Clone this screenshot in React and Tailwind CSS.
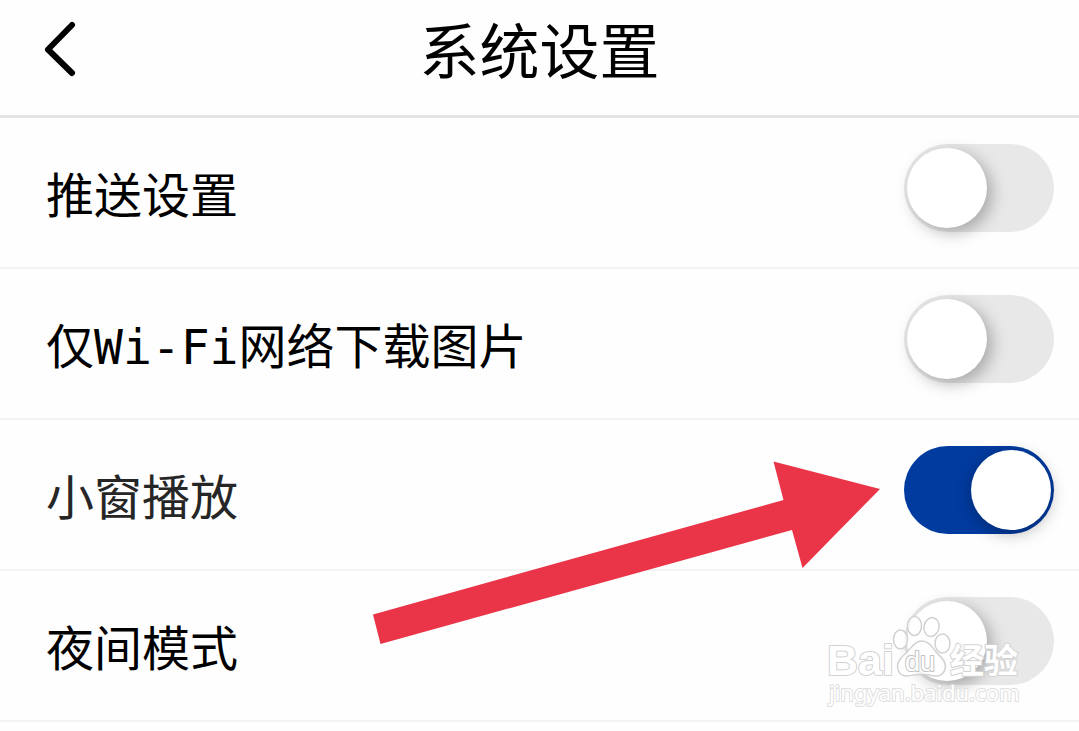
const rows = [
  { id: "push", label: "推送设置", on: false, tone: "text-black" },
  { id: "wifi", label: "仅Wi-Fi网络下载图片", on: false, tone: "text-black" },
  { id: "pip", label: "小窗播放", on: true, tone: "text-[#262626]" },
  { id: "night", label: "夜间模式", on: false, tone: "text-black" },
];

function SettingRow({ id, label, on, tone }) {
  return (
    <li className="flex h-[151px] items-start justify-between border-b-2 border-[#f3f3f3] pr-[25px] pl-[46px] pt-[26px]">
      <label htmlFor={id} className={`pt-4 text-5xl leading-[72px] ${tone}`}>
        {label}
      </label>
      <input
        id={id}
        type="checkbox"
        role="switch"
        defaultChecked={on}
        className="flex h-[88px] w-[150px] shrink-0 cursor-pointer appearance-none items-center justify-start rounded-full bg-[#e8e8e8] px-[3px] before:size-20 before:rounded-full before:bg-white before:shadow-[5px_5px_16px_rgba(0,0,0,0.28)] before:content-[''] checked:justify-end checked:bg-[#003b9f] checked:before:shadow-[0_4px_16px_rgba(0,0,0,0.28)]"
      />
    </li>
  );
}

function Arrow() {
  return (
    <svg
      aria-hidden="true"
      className="pointer-events-none absolute top-[461px] left-[372px] h-[184px] w-[510px]"
      viewBox="372 461 510 184"
    >
      <path d="M373 614.500 L783.500 500 L773.500 461.500 L880 489 L802.500 568 L792 530 L380.500 644 Z" fill="#ea3548" />
    </svg>
  );
}

function Watermark() {
  return (
    <svg
      className="pointer-events-none absolute top-[608px] left-[820px] h-[104px] w-[210px]"
      viewBox="820 608 210 104"
      fill="#ffffff"
      stroke="#d2d2d2"
      strokeWidth="2"
      strokeLinejoin="round"
      paintOrder="stroke"
    >
      <text x="827" y="675" fontSize="43" fontFamily="'Liberation Sans', sans-serif" fontWeight="700">Bai</text>
      <g strokeWidth="1.500" paintOrder="normal" fillOpacity="0.8">
        <ellipse cx="900.500" cy="639.500" rx="7" ry="9.500" />
        <ellipse cx="914.500" cy="626" rx="7" ry="9.500" />
        <ellipse cx="931.500" cy="627" rx="7.500" ry="9.500" transform="rotate(12 931.500 627)" />
        <ellipse cx="942.500" cy="643.500" rx="7.500" ry="9.500" />
        <path d="M922 641 C914 641 911 649 905 654 C899 659 896 664 898 670 C901 678 909 676 914 675 C919 674 924 674 929 675 C936 677 943 677 945 669 C947 662 941 657 936 652 C932 647 929 641 922 641Z" />
      </g>
      <text x="905" y="671" fontSize="27" fontFamily="'Liberation Sans', sans-serif" fontWeight="400" stroke="#c2c2c2">du</text>
      <text x="950" y="673" fontSize="34" fontFamily="'Noto Sans CJK SC', sans-serif" fontWeight="700">经验</text>
      <text x="829" y="701" fontSize="22" fontFamily="'Noto Sans', sans-serif" fontWeight="400" stroke="#dedede">jingyan.baidu.com</text>
    </svg>
  );
}

export default function App() {
  return (
    <div className="relative min-h-screen overflow-hidden bg-[#fefefe] font-['DejaVu_Sans_Mono','Noto_Sans_CJK_SC',sans-serif]">
      <header className="grid h-[118px] grid-cols-[1fr_auto_1fr] items-start border-b-3 border-[#e4e4e4]">
        <button type="button" aria-label="返回" className="mt-4 ml-8 size-16 cursor-pointer">
          <svg viewBox="0 0 64 64" className="size-16" fill="none" stroke="#000" strokeWidth="6" strokeLinecap="round" strokeLinejoin="round">
            <path d="M40 9 L16 33.500 L40 57" />
          </svg>
        </button>
        <h1 className="pt-2 text-6xl leading-[90px] font-normal text-black">系统设置</h1>
      </header>
      <main>
        <ul>
          {rows.map((row) => (
            <SettingRow key={row.id} {...row} />
          ))}
        </ul>
      </main>
      <Arrow />
      <Watermark />
    </div>
  );
}
